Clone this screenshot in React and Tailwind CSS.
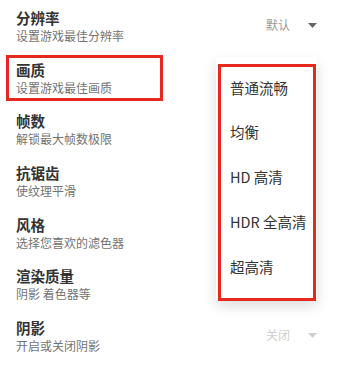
import React from "react";

const rows = [
  { t: "分辨率", s: "设置游戏最佳分辨率", v: "默认" },
  { t: "画质", s: "设置游戏最佳画质" },
  { t: "帧数", s: "解锁最大帧数极限" },
  { t: "抗锯齿", s: "使纹理平滑" },
  { t: "风格", s: "选择您喜欢的滤色器" },
  { t: "渲染质量", s: "阴影 着色器等" },
  { t: "阴影", s: "开启或关闭阴影", v: "关闭", dim: true },
  { t: "画面比例", s: "调整画面显示比例" },
];

const items = ["普通流畅", "均衡", "HD 高清", "HDR 全高清", "超高清"];

function Caret({ color }) {
  return (
    <svg width="9" height="5" viewBox="0 0 9 5" className="block">
      <path d="M0 0 L9 0 L4.5 5 Z" fill={color} />
    </svg>
  );
}

export default function App() {
  return (
    <div
      className="relative w-[340px] h-[371px] overflow-hidden bg-white"
      style={{ fontFamily: '"Noto Sans CJK SC", "Noto Sans", sans-serif' }}
    >
      <div className="flex flex-col">
        {rows.map((r, i) => (
          <div key={i} className="flex h-[51.67px] shrink-0 items-start justify-between pl-4 pr-[23px]">
            <div className="flex flex-col pt-[9px]">
              <div className="text-[14.5px] leading-[18px] font-bold text-[#333]">{r.t}</div>
              <div className="text-[12px] leading-[18px] text-[#737373]">{r.s}</div>
            </div>
            {r.v && (
              <div className="flex items-center gap-[18px] self-center pb-[1px]">
                <span className={`text-[12px] leading-[16px] ${r.dim ? "text-[#cfcfcf]" : "text-[#9a9a9a]"}`}>{r.v}</span>
                <Caret color={r.dim ? "#cfcfcf" : "#666"} />
              </div>
            )}
          </div>
        ))}
      </div>

      {/* dropdown menu */}
      <div className="absolute left-[216px] top-[57px] w-[101px] h-[243px] rounded-[3px] bg-white shadow-[0_6px_14px_rgba(0,0,0,0.14)] flex flex-col pt-[8px]">
        {items.map((it) => (
          <div key={it} className="flex h-[44.75px] items-center pl-[14px] text-[14.5px] text-[#333] whitespace-nowrap">
            {it}
          </div>
        ))}
      </div>

      {/* annotation boxes */}
      <div className="absolute left-[6px] top-[55px] w-[157px] h-[46px] border-[3px] border-[#e6281e]" />
      <div className="absolute left-[218px] top-[64px] w-[98px] h-[237px] border-[3px] border-[#e6281e]" />
    </div>
  );
}
